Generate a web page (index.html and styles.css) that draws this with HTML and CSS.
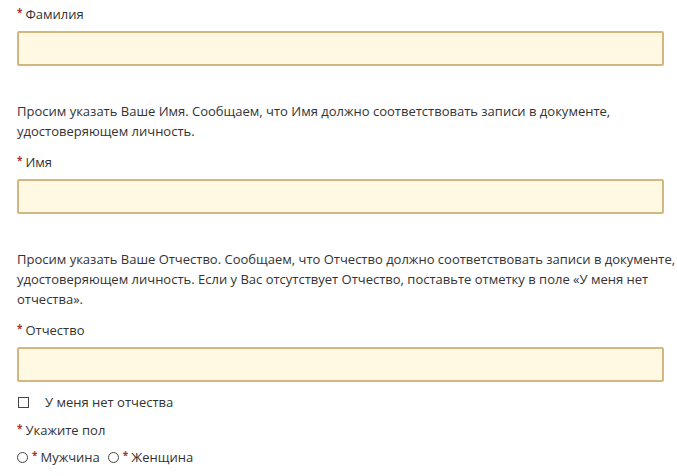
FILE: index.html
```html
<!DOCTYPE html>
<html lang="ru">
<head>
  <meta charset="UTF-8" />
  <title>Анкета</title>
  <link rel="stylesheet" href="styles.css">
</head>
<body>
  <form class="form">
    <div class="field">
      <label class="label req" for="lastname">Фамилия</label>
      <input class="input" id="lastname" type="text">
    </div>

    <p class="hint">Просим указать Ваше Имя. Сообщаем, что Имя должно соответствовать записи в документе, удостоверяющем личность.</p>
    <div class="field">
      <label class="label req" for="firstname">Имя</label>
      <input class="input" id="firstname" type="text">
    </div>

    <p class="hint">Просим указать Ваше Отчество. Сообщаем, что Отчество должно соответствовать записи в документе, удостоверяющем личность. Если у Вас отсутствует Отчество, поставьте отметку в поле «У меня нет отчества».</p>
    <div class="field">
      <label class="label req" for="middlename">Отчество</label>
      <input class="input" id="middlename" type="text">
    </div>

    <label class="check">
      <span class="box"></span>
      <span>У меня нет отчества</span>
    </label>

    <div class="label req">Укажите пол</div>
    <div class="radios">
      <label class="radio"><span class="circle"></span><span class="req">Мужчина</span></label>
      <label class="radio"><span class="circle"></span><span class="req">Женщина</span></label>
    </div>
  </form>
</body>
</html>
```

FILE: styles.css
```css
body {
  margin: 0;
  background: #fff;
  font-family: 'Open Sans', sans-serif;
  font-size: 13px;
  color: #333;
}

.form {
  width: 647px;
  padding: 4px 0 0 17px;
}

.field {
  display: flex;
  flex-direction: column;
  gap: 6px;
}

.label {
  display: block;
  line-height: 20px;
}

.req::before {
  content: "*";
  color: #a8322c;
  margin-right: 3px;
  font-size: 10px;
  font-weight: bold;
  position: relative;
  top: -3px;
}

.input {
  box-sizing: border-box;
  width: 100%;
  height: 35px;
  margin: 0;
  background: #fff8e3;
  border: 2px solid #d3b77f;
  border-radius: 2px;
}

.hint {
  margin: 35px -20px 11px 0;
  line-height: 20px;
}

.check {
  display: flex;
  align-items: center;
  gap: 16px;
  margin-top: 10px;
  line-height: 20px;
}

.box {
  width: 9px;
  height: 9px;
  border: 1px solid #444;
  margin-left: 1px;
}

.check + .label {
  margin-top: 8px;
}

.radios {
  display: flex;
  gap: 8px;
  margin-top: 6px;
  line-height: 20px;
}

.radio {
  display: flex;
  align-items: center;
  gap: 4px;
}

.circle {
  width: 9px;
  height: 9px;
  border: 1px solid #444;
  border-radius: 50%;
}
```
